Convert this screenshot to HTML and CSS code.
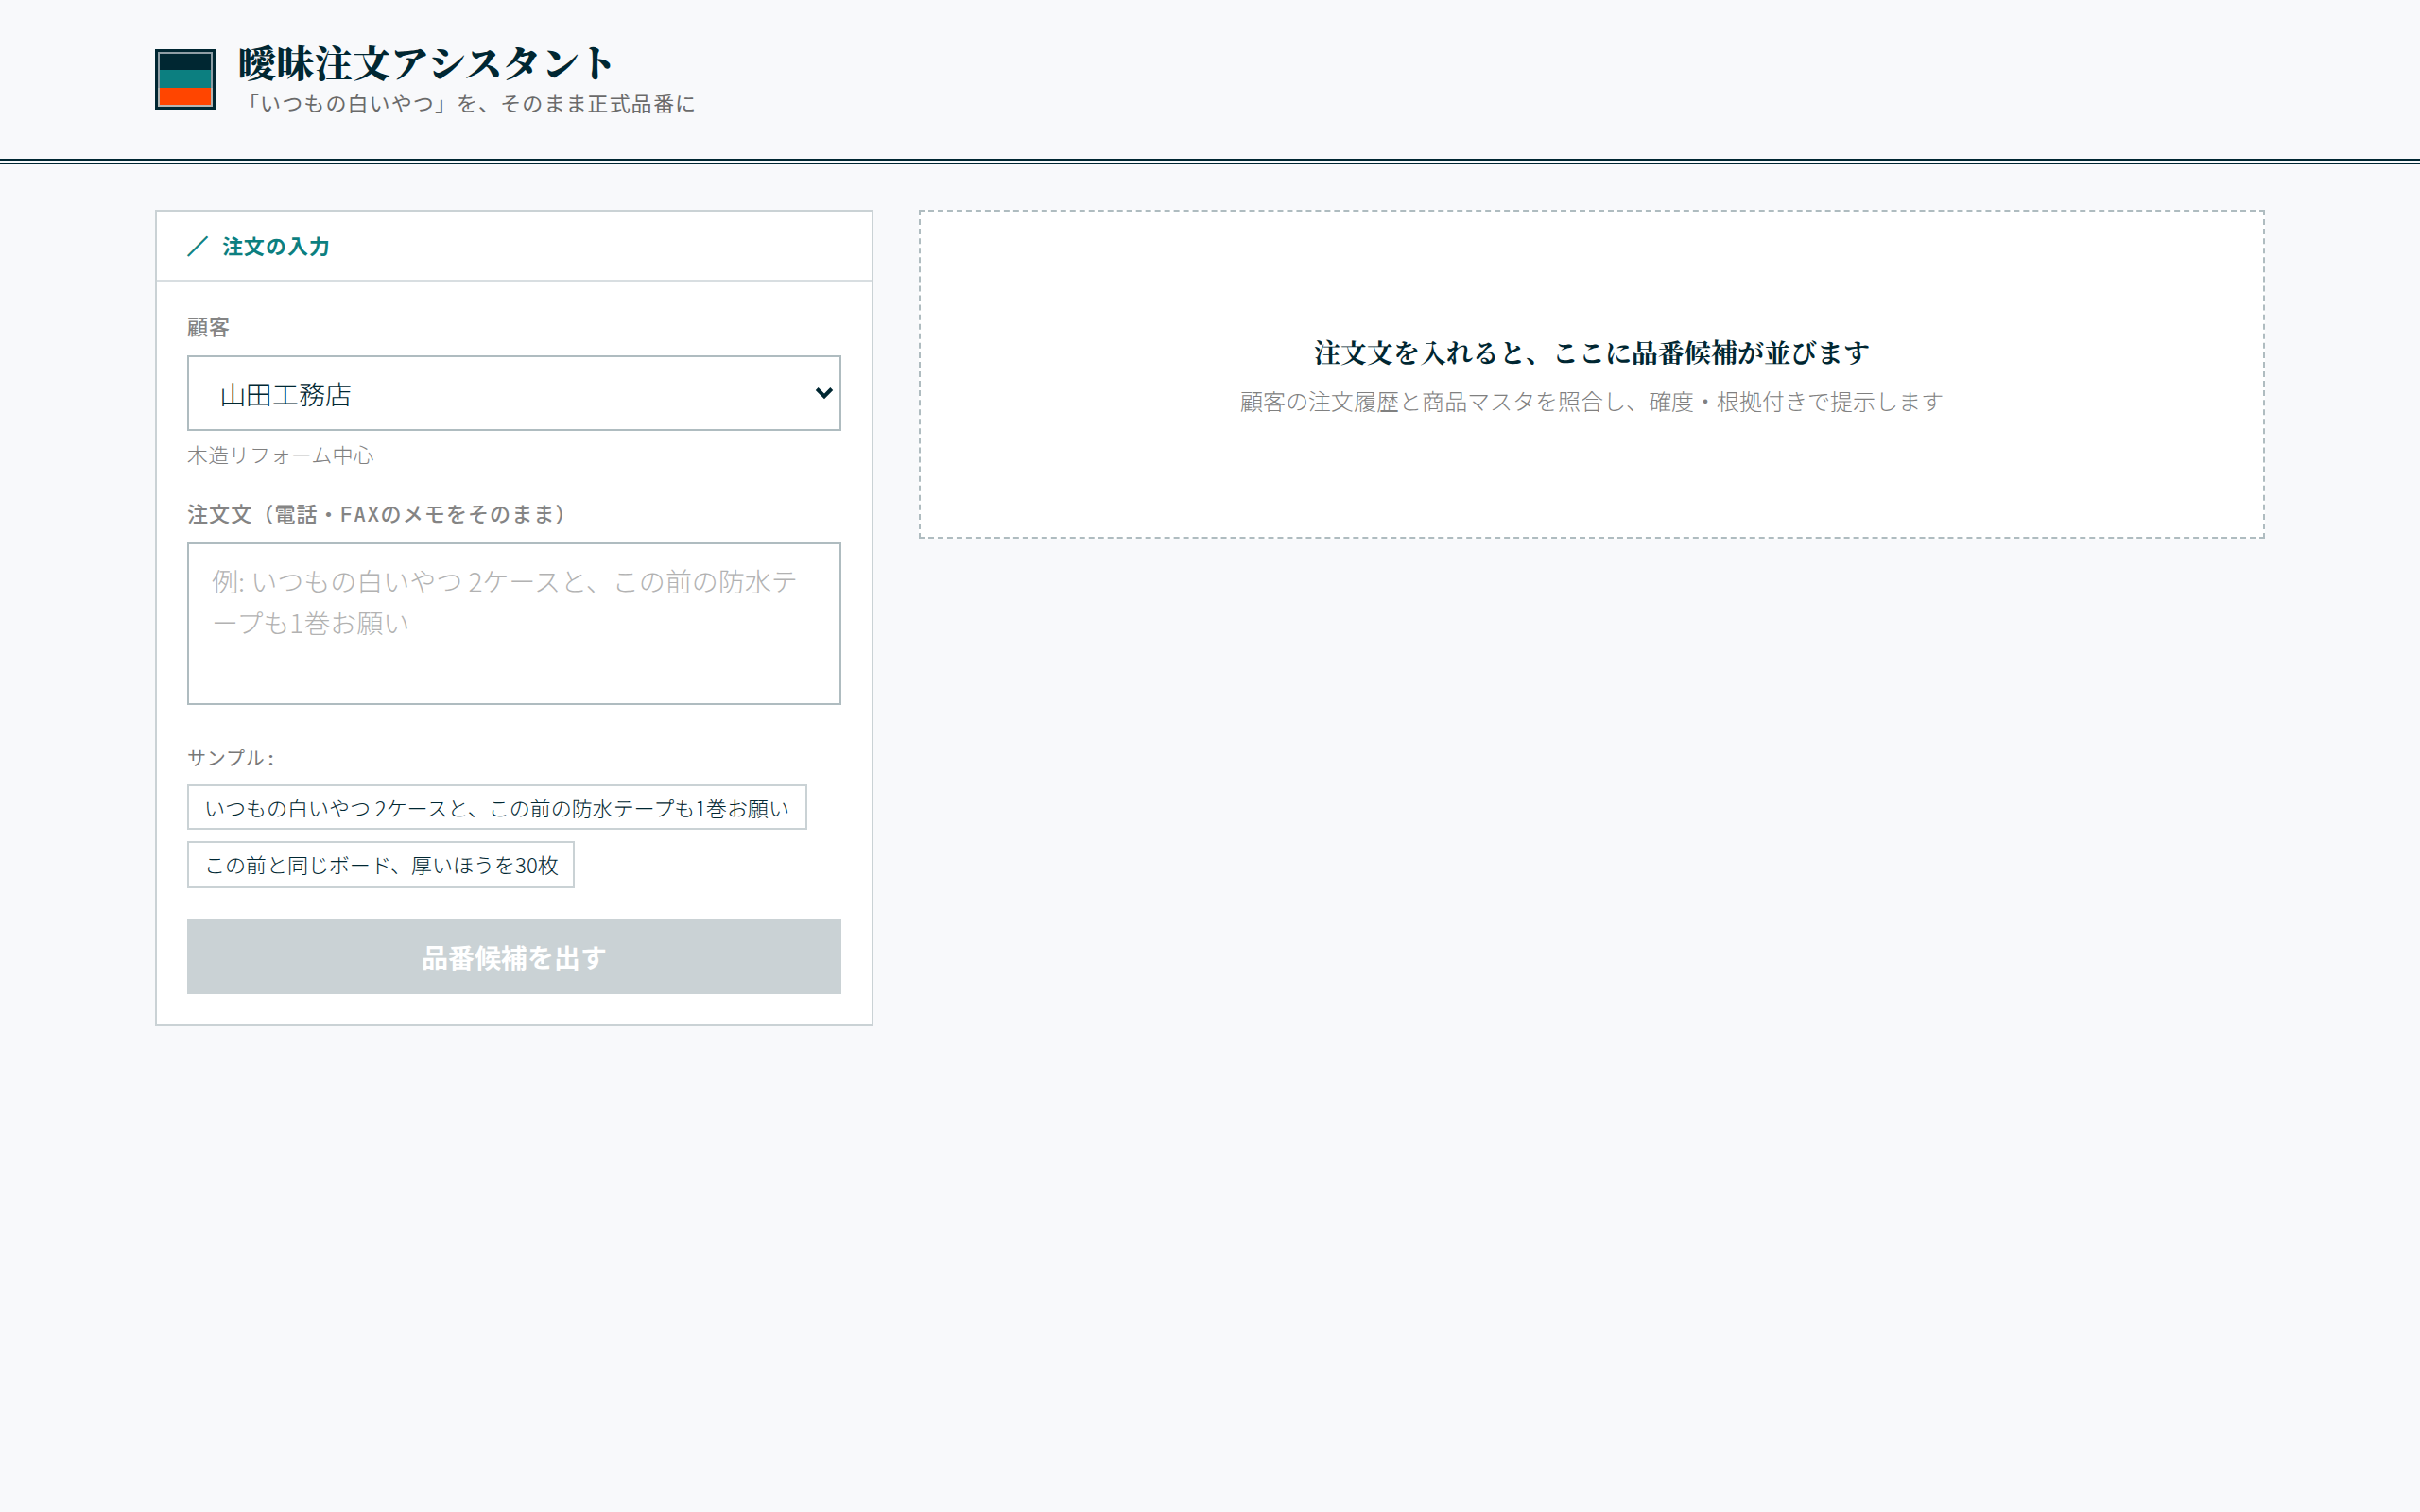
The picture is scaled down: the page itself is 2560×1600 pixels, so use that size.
FILE: index.html
```html
<!DOCTYPE html>
<html lang="ja">
<head>
<meta charset="utf-8">
<title>曖昧注文アシスタント</title>
<link rel="stylesheet" href="styles.css">
</head>
<body>
<header class="site-header">
  <div class="brand">
    <svg class="logo" viewBox="0 0 64 64" aria-hidden="true">
      <rect width="64" height="64" fill="#002732"/>
      <rect x="3" y="3" width="58" height="58" fill="#8f9ea5"/>
      <rect x="5" y="5" width="54" height="17" fill="#002732"/>
      <rect x="5" y="22" width="54" height="19" fill="#0c7f80"/>
      <rect x="5" y="41" width="54" height="18" fill="#ff4500"/>
      <path d="M4 41v19h56V41" fill="none" stroke="#b5b5b2" stroke-width="2"/>
    </svg>
    <div class="brand-text">
      <h1 class="title">曖昧注文アシスタント</h1>
      <p class="tagline">「いつもの白いやつ」を、そのまま正式品番に</p>
    </div>
  </div>
</header>
<main class="layout">
  <section class="card">
    <h2 class="card-head"><span class="slash">／</span><span>注文の入力</span></h2>
    <form class="card-body">
      <label class="label" for="customer">顧客</label>
      <div class="select-wrap">
        <select class="select" id="customer"><option>山田工務店</option></select>
        <svg class="chevron" viewBox="0 0 20 14" aria-hidden="true"><path d="M2.2 2.5 10 10.3 17.8 2.5" fill="none" stroke="#002732" stroke-width="4"/></svg>
      </div>
      <p class="hint">木造リフォーム中心</p>
      <label class="label" for="order">注文文（電話・FAXのメモをそのまま）</label>
      <textarea class="textarea" id="order" placeholder="例: いつもの白いやつ 2ケースと、この前の防水テープも1巻お願い"></textarea>
      <p class="sample-label">サンプル:</p>
      <div class="chips">
        <button type="button" class="chip chip-first">いつもの白いやつ 2ケースと、この前の防水テープも1巻お願い</button>
        <button type="button" class="chip">この前と同じボード、厚いほうを30枚</button>
      </div>
      <button type="button" class="submit">品番候補を出す</button>
    </form>
  </section>
  <section class="empty">
    <p class="empty-title">注文文を入れると、ここに品番候補が並びます</p>
    <p class="empty-text">顧客の注文履歴と商品マスタを照合し、確度・根拠付きで提示します</p>
  </section>
</main>
</body>
</html>
```
FILE: styles.css
```css
* { box-sizing: border-box; margin: 0; padding: 0; }

body {
  min-height: 1600px;
  background: #f8f9fb;
  color: #002732;
  font-family: "Noto Sans JP", "Noto Sans CJK JP", sans-serif;
  font-weight: 300;
}

.site-header {
  height: 174px;
  padding: 35px 164px 0;
  border-bottom: 6px double #002732;
}

.brand { display: flex; gap: 24px; }
.logo { width: 64px; height: 64px; margin-top: 17px; }

.title {
  font-family: "Noto Serif JP", "Noto Serif CJK JP", serif;
  font-weight: 900;
  font-size: 40px;
  line-height: 60px;
  letter-spacing: 0.4px;
}

.tagline {
  margin-top: -4px;
  font-size: 22px;
  font-weight: 400;
  line-height: 34px;
  letter-spacing: 1.1px;
  color: #6a6a6a;
}

.layout {
  display: grid;
  grid-template-columns: 760px 1fr;
  gap: 48px;
  align-items: start;
  padding: 48px 164px;
}

.card { height: 864px; background: #fff; border: 2px solid #cad2d5; }

.card-head {
  display: flex;
  align-items: center;
  gap: 15px;
  height: 74px;
  padding: 0 32px 3px;
  border-bottom: 2px solid #d8dee1;
  font-size: 22px;
  font-weight: 700;
  letter-spacing: 1px;
  color: #0c7f80;
}

.slash { letter-spacing: 0; -webkit-text-stroke: 0.9px #0c7f80; }

.card-body { display: flex; flex-direction: column; padding: 33px 32px 32px; }

.label {
  font-family: "JetBrains Mono", "Noto Sans CJK JP", monospace;
  font-size: 22px;
  font-weight: 500;
  line-height: 32px;
  letter-spacing: 1.1px;
  color: #848484;
  margin-bottom: 13px;
}

.select-wrap { display: grid; align-items: center; margin-bottom: 6px; }

.select, .chevron { grid-area: 1 / 1; }

.select {
  appearance: none;
  width: 100%;
  height: 80px;
  padding: 0 32px;
  border: 2px solid #afbcc0;
  border-radius: 0;
  background: #fff;
  color: inherit;
  font: inherit;
  font-size: 28px;
}

.chevron { justify-self: end; width: 20px; height: 14px; margin-right: 8px; }

.hint { font-size: 22px; line-height: 36px; margin-bottom: 31px; color: #808080; }

.textarea {
  display: block;
  height: 172px;
  padding: 16px 24px;
  border: 2px solid #afbcc0;
  resize: none;
  font: inherit;
  font-size: 28px;
  line-height: 44px;
}

.textarea::placeholder { color: #b2b2b2; }

.sample-label {
  margin-top: 42px;
  font-family: "JetBrains Mono", "Noto Sans CJK JP", monospace;
  font-size: 20px;
  font-weight: 400;
  line-height: 30px;
  letter-spacing: 0.8px;
  color: #787878;
}

.chips { display: flex; flex-direction: column; align-items: flex-start; gap: 12px; margin-top: 12px; }

.chip {
  width: 410px;
  height: 50px;
  padding: 0 16px 2px;
  border: 2px solid #cad2d5;
  background: #fff;
  color: inherit;
  font: inherit;
  font-size: 22px;
  text-align: left;
  white-space: nowrap;
}

.chip-first { width: 656px; height: 48px; padding-bottom: 0; }

.submit {
  height: 80px;
  margin-top: 32px;
  border: 0;
  background: #cad2d5;
  color: #fff;
  font: inherit;
  font-size: 28px;
  font-weight: 700;
}

.empty {
  height: 348px;
  padding-top: 126px;
  border: 2px dashed #afbcc0;
  background: #fff;
  text-align: center;
}

.empty-title {
  font-family: "Noto Serif JP", "Noto Serif CJK JP", serif;
  font-size: 28px;
  font-weight: 700;
  line-height: 44px;
}

.empty-text { margin-top: 10px; font-size: 24px; line-height: 40px; color: #808080; }
```
